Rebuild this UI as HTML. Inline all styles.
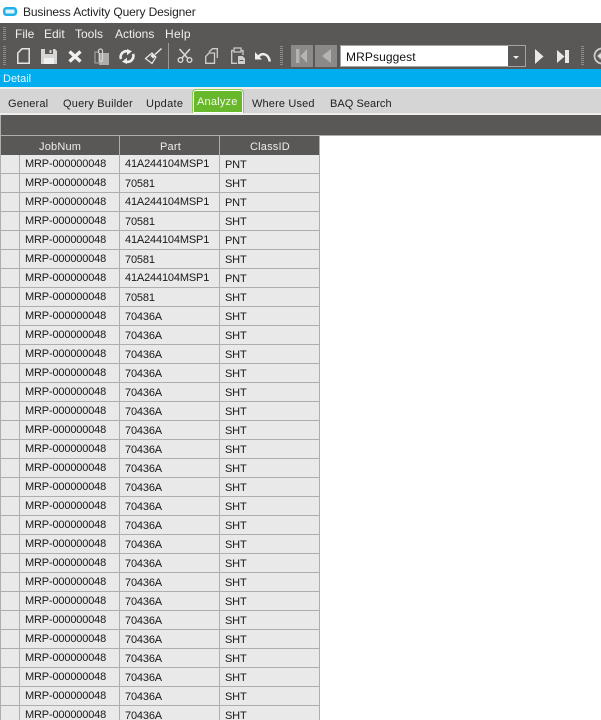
<!DOCTYPE html>
<html style="height:720px;overflow:hidden"><head><meta charset="utf-8">
<style>
html,body{margin:0;padding:0;background:#fff}
body{width:601px;height:720px;overflow:hidden;font-family:"Liberation Sans",Arial,sans-serif;font-size:11px;color:#1c1c1c}
#w{position:relative;width:601px;height:720px;overflow:hidden}
.a{position:absolute}
.t{position:absolute;white-space:nowrap;line-height:14px}
.m{color:#f0f0f0;font-size:12px;top:27px}
.tab{font-size:11px;top:97px;color:#222;letter-spacing:.15px}
.r{position:absolute;left:0;width:320px;height:19px;box-sizing:border-box;background-color:#e9e9e9;border-bottom:1px solid #aeaeae;background-image:linear-gradient(#aeaeae,#aeaeae),linear-gradient(#aeaeae,#aeaeae),linear-gradient(#aeaeae,#aeaeae),linear-gradient(#aeaeae,#aeaeae),linear-gradient(#aeaeae,#aeaeae);background-size:1px 100%;background-repeat:no-repeat;background-position:0 0,19px 0,119px 0,219px 0,319px 0}
.r span{position:absolute;white-space:nowrap;line-height:14px;font-weight:normal;color:#181818;letter-spacing:-.16px}
.j{left:25px;top:2px}
.p{left:125px;top:3px}
.q{left:125px;top:2px}
.c{left:225px;top:3px}
.h{color:#eee;top:140px;font-size:11px;letter-spacing:.2px}
svg{position:absolute;overflow:visible}
</style></head><body><div id="w">

<svg style="left:3px;top:7px" width="14" height="9"><rect x="1.250" y="1.250" width="11.500" height="6.500" rx="2" fill="#dff4fc" stroke="#22b0e8" stroke-width="2.500"/></svg>
<div class="t" style="left:23px;top:5px;font-size:12px;color:#222;letter-spacing:-.13px">Business Activity Query Designer</div>

<div class="a" style="left:0;top:23px;width:601px;height:46px;background:#595856"></div>
<svg style="left:3px;top:27px" width="4" height="14"><path d="M0 .5h3M0 2.500h3M0 4.500h3M0 6.500h3M0 8.500h3M0 10.500h3M0 12.500h3" stroke="#8d8c8a" stroke-width="1"/></svg>
<div class="t m" style="left:15px">File</div>
<div class="t m" style="left:44px">Edit</div>
<div class="t m" style="left:75px">Tools</div>
<div class="t m" style="left:115px">Actions</div>
<div class="t m" style="left:165px;letter-spacing:.3px">Help</div>

<svg style="left:3px;top:46px" width="4" height="20"><path d="M0 .5h3M0 2.500h3M0 4.500h3M0 6.500h3M0 8.500h3M0 10.500h3M0 12.500h3M0 14.500h3M0 16.500h3M0 18.500h3" stroke="#8d8c8a" stroke-width="1"/></svg>
<svg style="left:17px;top:48px" width="13" height="16"><path d="M5 .8H12.200V15.200H.8V5Z" fill="none" stroke="#e6e6e6" stroke-width="1.500"/></svg>
<svg style="left:41px;top:49px" width="16" height="15"><path d="M0 0H14L16 2V15H0Z" fill="#d6d6d6"/><path d="M4 0h8v5H4z" fill="#595856"/><path d="M8.500 1h2v3h-2z" fill="#d6d6d6"/><path d="M3 9h10v6H3z" fill="#f0f0f0"/></svg>
<svg style="left:68px;top:50px" width="14" height="13"><path d="M1.500 1.500L12.500 11.500M12.500 1.500L1.500 11.500" stroke="#f0f0f0" stroke-width="3.400"/></svg>
<svg style="left:94px;top:48px" width="15" height="17"><rect x="5" y="5" width="10" height="12" fill="#aeadab"/><rect x="1" y="4" width="4" height="11" fill="none" stroke="#aeadab"/><path d="M4.500 5V3a2 2 0 0 1 4 0V12a1.500 1.500 0 0 1-3 0V5" fill="none" stroke="#d4d4d4" stroke-width="1.200"/></svg>
<svg style="left:119px;top:49px" width="16" height="15"><path d="M2 10A5.800 5.800 0 0 1 8 2.200" fill="none" stroke="#eee" stroke-width="2.600"/><path d="M8 0l5 2.300-5 4z" fill="#eee"/><path d="M14 5A5.800 5.800 0 0 1 8 12.800" fill="none" stroke="#eee" stroke-width="2.600"/><path d="M8 15l-5-2.300 5-4z" fill="#eee"/></svg>
<svg style="left:145px;top:48px" width="17" height="16"><path d="M16.500 .5L10 6.500" stroke="#e8e8e8" stroke-width="1.500"/><path d="M7 5L11 9L7 15.500L.5 10.500Z" fill="none" stroke="#e8e8e8" stroke-width="1.200"/><path d="M7.500 5.500L10.500 8.500L8 10.500L5.500 8Z" fill="#e8e8e8"/></svg>
<div class="a" style="left:168px;top:43px;width:1px;height:26px;background:#9a9997"></div>
<svg style="left:177px;top:49px" width="16" height="14"><path d="M2.500 0L10.500 9M13 0L5 9" stroke="#d8d8d8" stroke-width="1.600"/><circle cx="3.500" cy="11" r="2.300" fill="none" stroke="#d8d8d8" stroke-width="1.400"/><circle cx="12.500" cy="11" r="2.300" fill="none" stroke="#d8d8d8" stroke-width="1.400"/></svg>
<svg style="left:205px;top:48px" width="13" height="16"><path d="M4 4L7.500 .7H12.300V10" fill="none" stroke="#cfcfcf" stroke-width="1.300"/><path d="M4 5H9.500V15.300H.7V8.500Z" fill="none" stroke="#cfcfcf" stroke-width="1.300"/></svg>
<svg style="left:231px;top:48px" width="14" height="16"><path d="M3 2.500H.7V15.300H6M10 2.500H12V7" fill="none" stroke="#cfcfcf" stroke-width="1.300"/><rect x="3" y="0" width="7" height="4" fill="none" stroke="#cfcfcf" stroke-width="1.200"/><path d="M7 8H11.500L14 10.500V16H7Z" fill="#cfcfcf"/><path d="M8.500 12.500h4" stroke="#595856"/></svg>
<svg style="left:255px;top:52px" width="16" height="10"><path d="M3.500 4.500C7 .5 13.500 1.500 14.800 9.500" fill="none" stroke="#eee" stroke-width="2.500"/><path d="M0 0V7.500H7Z" fill="#eee"/></svg>
<svg style="left:280px;top:46px" width="4" height="20"><path d="M0 .5h3M0 2.500h3M0 4.500h3M0 6.500h3M0 8.500h3M0 10.500h3M0 12.500h3M0 14.500h3M0 16.500h3M0 18.500h3" stroke="#8d8c8a" stroke-width="1"/></svg>

<div class="a" style="left:291px;top:45px;width:22px;height:22px;background:#8b8a88"></div>
<svg style="left:296px;top:49px" width="12" height="14"><path d="M0 0h3.500v14H0zM11 0v14L4.500 7z" fill="#b5b4b2"/></svg>
<div class="a" style="left:315px;top:45px;width:22px;height:22px;background:#8b8a88"></div>
<svg style="left:322px;top:49px" width="9" height="14"><path d="M9 0v14L0 7z" fill="#b5b4b2"/></svg>

<div class="a" style="left:340px;top:45px;width:186px;height:22px;background:#fff;border:1px solid #a5a4a2;box-sizing:border-box"></div>
<div class="a" style="left:508px;top:46px;width:17px;height:20px;background:#595856"></div>
<svg style="left:513px;top:56px" width="6" height="3"><path d="M0 0h6L3 3z" fill="#eee"/></svg>
<div class="t" style="left:346px;top:50px;font-size:12px;color:#111;letter-spacing:.1px">MRPsuggest</div>

<svg style="left:535px;top:49px" width="9" height="15"><path d="M0 0L8.500 7.500L0 15z" fill="#e8e8e8"/></svg>
<svg style="left:557px;top:50px" width="12" height="13"><path d="M0 0L7.500 6.500L0 13zM8 0h4v13H8z" fill="#e8e8e8"/></svg>
<svg style="left:581px;top:46px" width="4" height="20"><path d="M0 .5h3M0 2.500h3M0 4.500h3M0 6.500h3M0 8.500h3M0 10.500h3M0 12.500h3M0 14.500h3M0 16.500h3M0 18.500h3" stroke="#8d8c8a" stroke-width="1"/></svg>
<svg style="left:593px;top:47px" width="8" height="18"><circle cx="9" cy="9" r="7.500" fill="none" stroke="#ccc" stroke-width="1.800"/><circle cx="9" cy="9" r="4" fill="#8b8a88"/><path d="M4 9l5-3.500v7z" fill="#ddd"/></svg>

<div class="a" style="left:0;top:69px;width:601px;height:18px;background:#00adee"></div>
<div class="t" style="left:3px;top:72px;color:#e8f7ff;font-size:11px">Detail</div>

<div class="a" style="left:0;top:87px;width:601px;height:2px;background:#efefef"></div>
<div class="a" style="left:0;top:89px;width:601px;height:24px;background:#d5d5d5"></div>
<div class="t tab" style="left:8px">General</div>
<div class="t tab" style="left:63px;letter-spacing:.2px">Query Builder</div>
<div class="t tab" style="left:146px;letter-spacing:.3px">Update</div>
<div class="a" style="left:192px;top:89px;width:52px;height:24px;box-sizing:border-box;background:#67b82a;border:1px solid #8ccb55;border-bottom:none;border-radius:4px 4px 0 0;box-shadow:inset 0 0 0 1px #fff"></div>
<div class="t" style="left:197px;top:95px;color:#f4f9ee;letter-spacing:.2px">Analyze</div>
<div class="t tab" style="left:252px">Where Used</div>
<div class="t tab" style="left:330px;letter-spacing:.05px">BAQ Search</div>
<div class="a" style="left:0;top:113px;width:601px;height:2px;background:#efefef"></div>

<div class="a" style="left:0;top:115px;width:601px;height:20px;background:#595856;border-left:1px solid #aeaeae;box-sizing:border-box"></div>
<div class="a" style="left:0;top:135px;width:601px;height:1px;background:#aeaeae"></div>
<div class="a" style="left:0;top:136px;width:320px;height:19px;background:#595856"></div>
<div class="a" style="left:0;top:136px;width:1px;height:19px;background:#aeaeae"></div>
<div class="a" style="left:119px;top:136px;width:1px;height:19px;background:#aeaeae"></div>
<div class="a" style="left:219px;top:136px;width:1px;height:19px;background:#aeaeae"></div>
<div class="a" style="left:319px;top:136px;width:1px;height:19px;background:#aeaeae"></div>
<div class="t h" style="left:39px">JobNum</div>
<div class="t h" style="left:160px">Part</div>
<div class="t h" style="left:250px">ClassID</div>

<div class="r" style="top:155px"><span class="j">MRP-000000048</span><span class="q">41A244104MSP1</span><span class="c">PNT</span></div>
<div class="r" style="top:174px"><span class="j">MRP-000000048</span><span class="p">70581</span><span class="c">SHT</span></div>
<div class="r" style="top:193px"><span class="j">MRP-000000048</span><span class="q">41A244104MSP1</span><span class="c">PNT</span></div>
<div class="r" style="top:212px"><span class="j">MRP-000000048</span><span class="p">70581</span><span class="c">SHT</span></div>
<div class="r" style="top:231px"><span class="j">MRP-000000048</span><span class="q">41A244104MSP1</span><span class="c">PNT</span></div>
<div class="r" style="top:250px"><span class="j">MRP-000000048</span><span class="p">70581</span><span class="c">SHT</span></div>
<div class="r" style="top:269px"><span class="j">MRP-000000048</span><span class="q">41A244104MSP1</span><span class="c">PNT</span></div>
<div class="r" style="top:288px"><span class="j">MRP-000000048</span><span class="p">70581</span><span class="c">SHT</span></div>
<div class="r" style="top:307px"><span class="j">MRP-000000048</span><span class="p">70436A</span><span class="c">SHT</span></div>
<div class="r" style="top:326px"><span class="j">MRP-000000048</span><span class="p">70436A</span><span class="c">SHT</span></div>
<div class="r" style="top:345px"><span class="j">MRP-000000048</span><span class="p">70436A</span><span class="c">SHT</span></div>
<div class="r" style="top:364px"><span class="j">MRP-000000048</span><span class="p">70436A</span><span class="c">SHT</span></div>
<div class="r" style="top:383px"><span class="j">MRP-000000048</span><span class="p">70436A</span><span class="c">SHT</span></div>
<div class="r" style="top:402px"><span class="j">MRP-000000048</span><span class="p">70436A</span><span class="c">SHT</span></div>
<div class="r" style="top:421px"><span class="j">MRP-000000048</span><span class="p">70436A</span><span class="c">SHT</span></div>
<div class="r" style="top:440px"><span class="j">MRP-000000048</span><span class="p">70436A</span><span class="c">SHT</span></div>
<div class="r" style="top:459px"><span class="j">MRP-000000048</span><span class="p">70436A</span><span class="c">SHT</span></div>
<div class="r" style="top:478px"><span class="j">MRP-000000048</span><span class="p">70436A</span><span class="c">SHT</span></div>
<div class="r" style="top:497px"><span class="j">MRP-000000048</span><span class="p">70436A</span><span class="c">SHT</span></div>
<div class="r" style="top:516px"><span class="j">MRP-000000048</span><span class="p">70436A</span><span class="c">SHT</span></div>
<div class="r" style="top:535px"><span class="j">MRP-000000048</span><span class="p">70436A</span><span class="c">SHT</span></div>
<div class="r" style="top:554px"><span class="j">MRP-000000048</span><span class="p">70436A</span><span class="c">SHT</span></div>
<div class="r" style="top:573px"><span class="j">MRP-000000048</span><span class="p">70436A</span><span class="c">SHT</span></div>
<div class="r" style="top:592px"><span class="j">MRP-000000048</span><span class="p">70436A</span><span class="c">SHT</span></div>
<div class="r" style="top:611px"><span class="j">MRP-000000048</span><span class="p">70436A</span><span class="c">SHT</span></div>
<div class="r" style="top:630px"><span class="j">MRP-000000048</span><span class="p">70436A</span><span class="c">SHT</span></div>
<div class="r" style="top:649px"><span class="j">MRP-000000048</span><span class="p">70436A</span><span class="c">SHT</span></div>
<div class="r" style="top:668px"><span class="j">MRP-000000048</span><span class="p">70436A</span><span class="c">SHT</span></div>
<div class="r" style="top:687px"><span class="j">MRP-000000048</span><span class="p">70436A</span><span class="c">SHT</span></div>
<div class="r" style="top:706px"><span class="j">MRP-000000048</span><span class="p">70436A</span><span class="c">SHT</span></div>
</div></body></html>
